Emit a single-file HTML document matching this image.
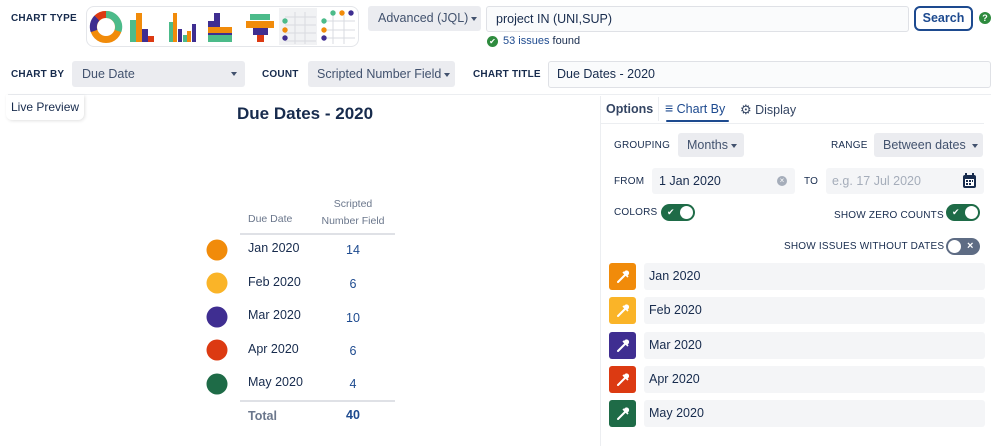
<!DOCTYPE html>
<html><head><meta charset="utf-8"><style>
*{box-sizing:border-box;margin:0;padding:0}
body{width:999px;height:446px;overflow:hidden;background:#fff;font-family:"Liberation Sans",sans-serif;color:#172b4d;position:relative;font-size:12.5px}
.a{position:absolute}
.lbl{font-size:10px;font-weight:bold;color:#172b4d;letter-spacing:.2px}
.gb{background:#ebecf0;border-radius:3px}
.fld{background:#f4f5f7;border:1px solid #dfe1e6;border-radius:3px}
.caret{display:inline-block;border-left:3.5px solid transparent;border-right:3.5px solid transparent;border-top:4px solid #42526e;vertical-align:middle;margin-left:3px}
.tg{position:absolute;width:34px;height:17px;border-radius:9px;background:#1e6b47}
.tg .k{position:absolute;top:2px;width:13px;height:13px;border-radius:50%;background:#fff}
.tg .m{position:absolute;top:0;height:17px;line-height:17px;color:#fff;font-size:9px}
.cr{position:absolute;left:217px;width:21px;height:21px;border-radius:50%;transform:translate(-50%,-50%)}
.dt{position:absolute;left:248px;font-size:12.5px}
.v{position:absolute;left:353px;transform:translateX(-50%);color:#1d4a8f;font-size:12.5px}
.sw{position:absolute;left:609px;width:27px;height:27px;border-radius:3px}
.bar{position:absolute;left:644px;width:341px;height:27px;background:#f4f5f7;border-radius:3px;padding-left:5px;line-height:27px;font-size:12.5px}
</style></head><body>
<div class="a lbl" style="left:11px;top:13px">CHART TYPE</div>
<div class="a" style="left:86px;top:6px;width:273px;height:41px;border:1px solid #e4e6ea;border-radius:8px;background:#fff"></div>
<svg class="a" style="left:0;top:0" width="370" height="50">
<rect x="279" y="8" width="38" height="37" fill="#f1f2f4"/>
<circle cx="106" cy="27" r="12.5" fill="none" stroke="#f18b0a" stroke-width="7"/>
<path d="M106 14.5 A12.5 12.5 0 0 1 118 31" fill="none" stroke="#4cbb8a" stroke-width="7"/>
<path d="M94 31 A12.5 12.5 0 0 1 97 18" fill="none" stroke="#3f2e91" stroke-width="7"/>
<path d="M97 18 A12.5 12.5 0 0 1 106 14.5" fill="none" stroke="#dc3a12" stroke-width="7"/>
<rect x="130" y="20" width="6" height="22" fill="#4cbb8a"/><rect x="136" y="13" width="6" height="29" fill="#f18b0a"/><rect x="142" y="29" width="6" height="13" fill="#3f2e91"/><rect x="148" y="36" width="6" height="6" fill="#dc3a12"/>
<rect x="169" y="22" width="4" height="20" fill="#4cbb8a"/><rect x="173" y="13" width="4" height="29" fill="#f18b0a"/><rect x="178" y="29" width="4" height="13" fill="#3f2e91"/><rect x="183" y="35" width="4" height="7" fill="#4cbb8a"/><rect x="187" y="31" width="4" height="11" fill="#f18b0a"/><rect x="192" y="24" width="4" height="18" fill="#3f2e91"/>
<rect x="208" y="21" width="6" height="21" fill="#3f2e91"/><rect x="214" y="13" width="6" height="29" fill="#3f2e91"/><rect x="220" y="28" width="6" height="14" fill="#3f2e91"/><rect x="226" y="33" width="6" height="9" fill="#3f2e91"/>
<rect x="208" y="27" width="24" height="6" fill="#f18b0a"/><rect x="208" y="35" width="24" height="7" fill="#4cbb8a"/>
<rect x="250" y="14" width="20" height="6" fill="#4cbb8a"/><rect x="246" y="21" width="28" height="7" fill="#f18b0a"/><rect x="253" y="28" width="15" height="7" fill="#3f2e91"/><rect x="257" y="35" width="7" height="7" fill="#dc3a12"/>
<g stroke="#d9dbe0"><path d="M285 17H316M285 25H316M285 33H316M285 41H316M295 12V44M305 12V44"/></g>
<circle cx="285" cy="21" r="2.7" fill="#4cbb8a"/><circle cx="285" cy="30" r="2.7" fill="#f18b0a"/><circle cx="285" cy="38" r="2.7" fill="#3f2e91"/>
<g stroke="#d9dbe0"><path d="M326 21H355M326 30H355M326 38H355M333 15V44M344 15V44"/></g>
<circle cx="324" cy="21" r="2.7" fill="#4cbb8a"/><circle cx="324" cy="30" r="2.7" fill="#f18b0a"/><circle cx="324" cy="38" r="2.7" fill="#3f2e91"/>
<circle cx="333" cy="13" r="2.7" fill="#4cbb8a"/><circle cx="342" cy="13" r="2.7" fill="#f18b0a"/><circle cx="351" cy="13" r="2.7" fill="#3f2e91"/>
</svg>
<div class="a gb" style="left:368px;top:6px;width:113px;height:25px;line-height:25px;padding-left:10px;color:#42526e">Advanced (JQL)<span class="caret"></span></div>
<div class="a fld" style="left:486px;top:6px;width:423px;height:26px;line-height:24px;padding-left:9px;background:#fafbfc">project IN (UNI,SUP)</div>
<div class="a" style="left:914px;top:6px;width:59px;height:25px;border:2px solid #1d4a8f;border-radius:6px;color:#1d4a8f;font-weight:bold;text-align:center;line-height:21px;font-size:12.5px">Search</div>
<div class="a" style="left:979px;top:12px;width:12px;height:12px;border-radius:50%;background:#2e8b3e;color:#fff;font-size:9px;font-weight:bold;text-align:center;line-height:12px">?</div>
<div class="a" style="left:487px;top:36px;width:11px;height:11px;border-radius:50%;background:#2e8b3e;color:#fff;font-size:8px;text-align:center;line-height:11px">✔</div>
<div class="a" style="left:503px;top:35px;font-size:11px"><span style="color:#1d4a8f">53 issues</span> found</div>

<div class="a lbl" style="left:11px;top:69px">CHART BY</div>
<div class="a gb" style="left:72px;top:61px;width:173px;height:26px;line-height:26px;padding-left:10px;color:#42526e">Due Date<span class="caret" style="position:absolute;right:8px;top:11px"></span></div>
<div class="a lbl" style="left:262px;top:69px">COUNT</div>
<div class="a gb" style="left:308px;top:61px;width:147px;height:26px;line-height:26px;padding-left:9px;color:#42526e">Scripted Number Field<span class="caret"></span></div>
<div class="a lbl" style="left:473px;top:69px">CHART TITLE</div>
<div class="a fld" style="left:548px;top:61px;width:443px;height:27px;line-height:25px;padding-left:8px;background:#fafbfc">Due Dates - 2020</div>
<div class="a" style="left:8px;top:94px;width:983px;height:1px;background:#eceef1"></div>

<div class="a" style="left:6px;top:95px;width:78px;height:25px;border-radius:0 0 6px 6px;box-shadow:1px 1px 3px rgba(0,0,0,.12);line-height:24px;padding-left:5px;font-size:12px;color:#172b4d">Live Preview</div>
<div class="a" style="left:237px;top:104px;font-size:17px;font-weight:bold">Due Dates - 2020</div>

<div class="a" style="left:248px;top:213px;font-size:10.5px;color:#6b778c">Due Date</div>
<div class="a" style="left:353px;top:196px;transform:translateX(-50%);font-size:10.5px;color:#6b778c;text-align:center;line-height:17px;white-space:nowrap">Scripted<br>Number Field</div>
<div class="a" style="left:240px;top:233px;width:155px;height:2px;background:#dfe1e6"></div>
<div class="cr" style="top:250px;background:#f18b0a"></div><div class="dt" style="top:241px">Jan 2020</div><div class="v" style="top:243px">14</div>
<div class="cr" style="top:283px;background:#fab428"></div><div class="dt" style="top:275px">Feb 2020</div><div class="v" style="top:277px">6</div>
<div class="cr" style="top:317px;background:#3f2e91"></div><div class="dt" style="top:308px">Mar 2020</div><div class="v" style="top:311px">10</div>
<div class="cr" style="top:350px;background:#dc3a12"></div><div class="dt" style="top:342px">Apr 2020</div><div class="v" style="top:344px">6</div>
<div class="cr" style="top:384px;background:#1e6b47"></div><div class="dt" style="top:375px">May 2020</div><div class="v" style="top:377px">4</div>
<div class="a" style="left:240px;top:400px;width:155px;height:2px;background:#dfe1e6"></div>
<div class="a" style="left:248px;top:409px;font-weight:bold;color:#6b778c">Total</div>
<div class="v" style="top:408px;font-weight:bold">40</div>

<div class="a" style="left:600px;top:96px;width:1px;height:350px;background:#eceef1"></div>
<div class="a" style="left:606px;top:102px;font-weight:bold;color:#344563">Options</div>
<div class="a" style="left:658px;top:97px;width:1px;height:24px;background:#eceef1"></div>
<div class="a" style="left:665px;top:102px;color:#1d4a8f"><span style="font-size:14px;line-height:12px">≡</span> Chart By</div>
<div class="a" style="left:666px;top:120px;width:63px;height:2px;background:#1d4a8f;border-radius:1px"></div>
<div class="a" style="left:740px;top:102px;color:#344563"><span style="font-size:13px">⚙</span> Display</div>
<div class="a" style="left:601px;top:123px;width:383px;height:1px;background:#eceef1"></div>

<div class="a lbl" style="left:614px;top:140px;font-weight:normal;color:#172b4d">GROUPING</div>
<div class="a gb" style="left:678px;top:133px;width:66px;height:24px;line-height:24px;padding-left:9px;color:#42526e">Months<span class="caret"></span></div>
<div class="a lbl" style="left:831px;top:140px;font-weight:normal">RANGE</div>
<div class="a gb" style="left:874px;top:133px;width:109px;height:24px;line-height:24px;padding-left:9px;color:#42526e">Between dates <span class="caret"></span></div>

<div class="a lbl" style="left:614px;top:176px;font-weight:normal">FROM</div>
<div class="a" style="left:652px;top:168px;width:143px;height:26px;background:#f4f5f7;border-radius:3px;line-height:26px;padding-left:7px">1 Jan 2020</div>
<div class="a" style="left:777px;top:176px;width:10px;height:10px;border-radius:50%;background:#a5adba;color:#fff;font-size:8px;text-align:center;line-height:10px">×</div>
<div class="a lbl" style="left:804px;top:176px;font-weight:normal">TO</div>
<div class="a" style="left:826px;top:168px;width:158px;height:26px;background:#f4f5f7;border-radius:3px;line-height:26px;padding-left:6px;color:#a5adba">e.g. 17 Jul 2020</div>
<svg class="a" style="left:962px;top:173px" width="15" height="16"><rect x="1" y="2" width="13" height="13" rx="2" fill="#172b4d"/><rect x="3" y="6" width="9" height="7" fill="#fff"/><g fill="#172b4d"><rect x="4" y="7" width="2" height="2"/><rect x="7" y="7" width="2" height="2"/><rect x="10" y="7" width="1" height="2"/><rect x="4" y="10" width="2" height="2"/><rect x="7" y="10" width="2" height="2"/></g><rect x="3" y="0" width="2" height="4" fill="#172b4d"/><rect x="10" y="0" width="2" height="4" fill="#172b4d"/></svg>

<div class="a lbl" style="left:614px;top:207px;font-weight:normal">COLORS</div>
<div class="tg" style="left:661px;top:204px"><span class="m" style="left:6px">✔</span><div class="k" style="left:19px"></div></div>
<div class="a lbl" style="left:834px;top:210px;font-weight:normal">SHOW ZERO COUNTS</div>
<div class="tg" style="left:946px;top:204px"><span class="m" style="left:6px">✔</span><div class="k" style="left:19px"></div></div>
<div class="a lbl" style="left:784px;top:241px;font-weight:normal">SHOW ISSUES WITHOUT DATES</div>
<div class="tg" style="left:946px;top:238px;background:#5e6c84"><div class="k" style="left:2px"></div><span class="m" style="left:21px;font-size:11px;font-weight:bold">×</span></div>

<div class="sw" style="top:263px;background:#f18b0a"></div><div class="bar" style="top:263px">Jan 2020</div>
<div class="sw" style="top:297px;background:#fab428"></div><div class="bar" style="top:297px">Feb 2020</div>
<div class="sw" style="top:332px;background:#3f2e91"></div><div class="bar" style="top:332px">Mar 2020</div>
<div class="sw" style="top:366px;background:#dc3a12"></div><div class="bar" style="top:366px">Apr 2020</div>
<div class="sw" style="top:400px;background:#1e6b47"></div><div class="bar" style="top:400px">May 2020</div>
<svg class="a" style="left:609px;top:263px" width="27" height="165">
<defs><g id="ed"><path d="M9 19L16 12" stroke="#fff" stroke-width="2" stroke-linecap="round"/><circle cx="17.5" cy="10" r="2.6" fill="#fff"/><path d="M14 9L19 14" stroke="#fff" stroke-width="1.6"/></g></defs>
<use href="#ed"/><use href="#ed" y="34"/><use href="#ed" y="69"/><use href="#ed" y="103"/><use href="#ed" y="137"/>
</svg>
</body></html>
